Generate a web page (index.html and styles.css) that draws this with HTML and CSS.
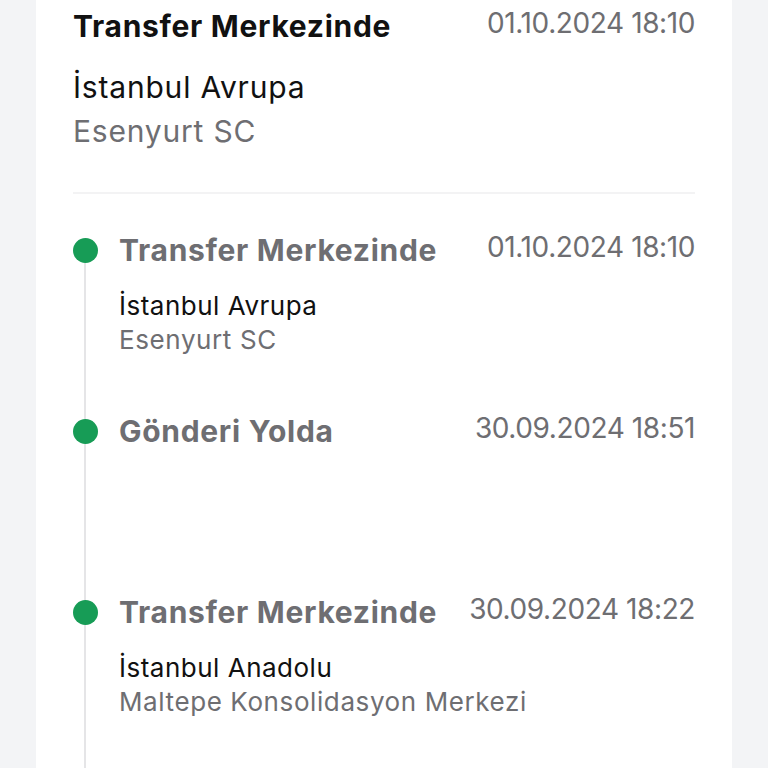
FILE: index.html
```html
<!DOCTYPE html>
<html>
<head>
    <title>Gönderi Takibi</title>
    <link rel="stylesheet" href="styles.css">
</head>
<body>
    <div class="card">
        <div class="summary">
            <div class="row">
                <h2 class="status">Transfer Merkezinde</h2>
                <span class="date">01.10.2024 18:10</span>
            </div>
            <div class="place">İstanbul Avrupa</div>
            <div class="branch">Esenyurt SC</div>
        </div>

        <ul class="timeline">
            <li class="event">
                <span class="dot"></span>
                <div class="event-body">
                    <div class="row">
                        <h3 class="event-status">Transfer Merkezinde</h3>
                        <span class="date">01.10.2024 18:10</span>
                    </div>
                    <div class="event-place">İstanbul Avrupa</div>
                    <div class="event-branch">Esenyurt SC</div>
                </div>
            </li>
            <li class="event">
                <span class="dot"></span>
                <div class="event-body">
                    <div class="row">
                        <h3 class="event-status">Gönderi Yolda</h3>
                        <span class="date">30.09.2024 18:51</span>
                    </div>
                </div>
            </li>
            <li class="event">
                <span class="dot"></span>
                <div class="event-body">
                    <div class="row">
                        <h3 class="event-status">Transfer Merkezinde</h3>
                        <span class="date">30.09.2024 18:22</span>
                    </div>
                    <div class="event-place">İstanbul Anadolu</div>
                    <div class="event-branch">Maltepe Konsolidasyon Merkezi</div>
                </div>
            </li>
        </ul>
    </div>
</body>
</html>
```

FILE: styles.css
```css
body {
    margin: 0;
    padding: 0 36px;
    background: #f3f4f6;
    font-family: Inter, "Noto Sans", sans-serif;
}

.card {
    height: 768px;
    padding: 0 37px;
    background: #fff;
    overflow: hidden;
}

.row {
    display: flex;
    justify-content: space-between;
    align-items: flex-start;
}

.summary {
    padding: 8px 0 39px;
    border-bottom: 2px solid #f3f3f4;
}

.status {
    margin: 0;
    font-size: 30px;
    line-height: 36px;
    font-weight: 700;
    letter-spacing: 0.7px;
    color: #111;
}

.date {
    font-size: 28px;
    line-height: 30px;
    letter-spacing: -0.4px;
    color: #6e6e72;
}

.place {
    margin-top: 21px;
    font-size: 30px;
    line-height: 44px;
    letter-spacing: 0.8px;
    color: #111;
}

.branch {
    font-size: 30px;
    line-height: 44px;
    letter-spacing: 0.8px;
    color: #6e6e72;
}

.timeline {
    list-style: none;
    margin: 0;
    padding: 38px 0 0;
}

.event {
    position: relative;
    display: flex;
    min-height: 181px;
}

.event::before {
    content: "";
    position: absolute;
    left: 11px;
    top: 18px;
    width: 2px;
    height: 100%;
    background: #e5e5e7;
}

.dot {
    position: relative;
    flex: none;
    width: 25px;
    height: 25px;
    margin: 6px 21px 0 0;
    border-radius: 50%;
    background: #179c56;
}

.event-body {
    flex: 1;
}

.event-status {
    margin: 0;
    font-size: 30px;
    line-height: 36px;
    font-weight: 700;
    letter-spacing: 0.7px;
    color: #6e6e72;
}

.event-place {
    margin-top: 21px;
    font-size: 26px;
    line-height: 34px;
    letter-spacing: 0.5px;
    color: #111;
}

.event-branch {
    font-size: 26px;
    line-height: 34px;
    letter-spacing: 0.6px;
    color: #6e6e72;
}
```
